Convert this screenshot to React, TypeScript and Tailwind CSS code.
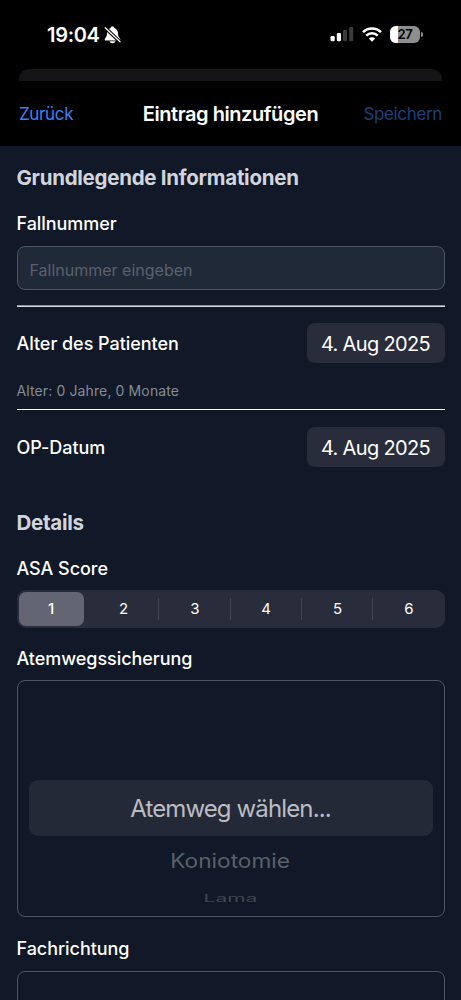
import type { ReactNode } from 'react'

const ASA_SCORES = [1, 2, 3, 4, 5, 6]
const SELECTED_ASA = 1

function BellOffIcon() {
  return (
    <svg width="17" height="18" viewBox="0 0 17 18" aria-hidden="true">
      <path
        d="M8.500.6c-1 0-1.700.5-1.800 1.300C4.400 2.700 3.100 4.600 3 7.300c-.1 2.500-.6 3.600-1.600 4.700-.5.600-.7.900-.7 1.400 0 .6.400 1 1.100 1h13.400c.7 0 1.100-.4 1.100-1 0-.5-.2-.8-.7-1.400-1-1.100-1.500-2.200-1.600-4.700-.1-2.700-1.400-4.600-3.700-5.400-.1-.8-.8-1.300-1.800-1.300z"
        fill="white"
      />
      <path d="M5.600 15.200h5.800c-.3 1.200-1.400 2-2.900 2s-2.600-.8-2.900-2z" fill="white" />
      <path d="M.6 1.200 16.600 16.400" stroke="black" strokeWidth="3.400" />
      <path d="M1.200 1.700 16 15.800" stroke="white" strokeWidth="1.300" strokeLinecap="round" />
    </svg>
  )
}

function SignalIcon() {
  return (
    <svg width="24" height="16" viewBox="0 0 24 16" aria-hidden="true">
      <rect x="0.500" y="10" width="4.200" height="5.300" rx="1.200" fill="white" />
      <rect x="6.800" y="7" width="4.200" height="8.300" rx="1.200" fill="white" />
      <rect x="13" y="4" width="4" height="11.300" rx="1.200" fill="#3b3b3b" />
      <rect x="19.200" y="1" width="4" height="14.300" rx="1.200" fill="#3b3b3b" />
    </svg>
  )
}

function WifiIcon() {
  return (
    <svg width="20" height="15" viewBox="0 0 20 15" aria-hidden="true">
      <g fill="none" stroke="white" strokeWidth="2.500">
        <path d="M1 5.200a12.700 12.700 0 0 1 18 0" />
        <path d="M4.300 8.700a8.100 8.100 0 0 1 11.400 0" />
      </g>
      <path d="M10 14.700 6.800 11.500a4.600 4.600 0 0 1 6.400 0z" fill="white" />
    </svg>
  )
}

function Battery({ level }: { level: number }) {
  return (
    <div className="flex items-center gap-px">
      <div className="relative h-[17px] w-[30px] overflow-hidden rounded-[6px] bg-[#8e8e8e]">
        <div className="h-full bg-white" style={{ width: `${level}%` }} />
        <span className="absolute inset-0 text-center text-[13px] leading-[17px] font-semibold tracking-[-0.2px] text-black">
          {level}
        </span>
      </div>
      <div className="h-[5px] w-[2px] rounded-r-full bg-[#8e8e8e]" />
    </div>
  )
}

function StatusBar() {
  return (
    <div className="flex h-[69px] justify-between pr-[38px] pl-[47px]">
      <div className="flex h-[69px] items-center gap-[4px]">
        <span className="text-[20px] font-semibold tracking-[-0.3px] text-white">19:04</span>
        <BellOffIcon />
      </div>
      <div className="flex h-[68px] items-center gap-[8px]">
        <SignalIcon />
        <WifiIcon />
        <Battery level={27} />
      </div>
    </div>
  )
}

function Label({ children }: { children: ReactNode }) {
  return (
    <span className="block text-[18px] leading-6 font-medium tracking-[-0.05px] text-white">
      {children}
    </span>
  )
}

function SectionTitle({ children }: { children: ReactNode }) {
  return (
    <h2 className="text-[20.5px] leading-7 font-bold tracking-[-0.27px] text-[#d1d5db]">
      {children}
    </h2>
  )
}

function DateRow({ label, value }: { label: string; value: string }) {
  return (
    <div className="flex h-10 items-center justify-between">
      <div className="pt-[2px]">
        <Label>{label}</Label>
      </div>
      <button className="h-10 w-[138px] rounded-[8px] bg-[#292d3b] pt-[2px] text-[20px] tracking-[-0.65px] whitespace-nowrap text-white">
        {value}
      </button>
    </div>
  )
}

function SegmentedControl() {
  return (
    <div className="mt-[9px] grid h-[38px] grid-cols-6 rounded-[9px] bg-[#292d3b]">
      {ASA_SCORES.map((score) => (
        <div key={score} className="flex items-center pl-[2px]">
          <button
            className={
              score === SELECTED_ASA
                ? 'mr-[3px] h-[34px] flex-1 rounded-[7px] bg-[#636672] pt-px text-[15px] font-medium text-white'
                : 'mr-px h-[34px] flex-1 pt-px text-[15px] text-white'
            }
          >
            {score}
          </button>
          <div className={score > 1 && score < 6 ? 'h-[22px] w-px bg-[#42454f]' : 'h-[22px] w-px'} />
        </div>
      ))}
    </div>
  )
}

function WheelPicker() {
  return (
    <div className="mt-[9px] h-[237px] overflow-hidden rounded-[8px] border border-[#4b5563] px-[11px] pt-[99px] text-center">
      <div className="h-[56px] rounded-[9px] bg-[#242937] text-[24px] leading-[57px] tracking-[-0.87px] text-[#bbbdc2]">
        <span>Atemweg wählen...</span>
      </div>
      <div className="h-[50px] text-[22px] leading-[50px] text-[#5b606b]">
        <span className="inline-block scale-x-103 scale-y-90">Koniotomie</span>
      </div>
      <div className="h-6 text-[21px] leading-6 text-[#414753]">
        <span className="inline-block scale-y-50">Lama</span>
      </div>
    </div>
  )
}

export default function App() {
  return (
    <div className="h-[1000px] w-[461px] overflow-hidden bg-[#111827] font-['Inter','Liberation_Sans',sans-serif]">
      <header className="h-[146px] bg-black">
        <StatusBar />
        {/* edge of the sheet underneath */}
        <div className="mx-[19px] h-3 rounded-t-[10px] bg-[#151517]" />
        <nav className="grid h-[65px] grid-cols-[1fr_auto_1fr] items-center px-[19px]">
          <button className="pt-[2px] text-left text-[17px] tracking-[-0.35px] text-[#3b82f6]">
            Zurück
          </button>
          <h1 className="text-[20px] font-semibold tracking-[-0.44px] text-white">
            Eintrag hinzufügen
          </h1>
          <button className="pt-[2px] text-right text-[17px] tracking-[-0.35px] text-[#1e407a]">
            Speichern
          </button>
        </nav>
      </header>

      <main className="px-[16.500px] pt-[18px]">
        <SectionTitle>Grundlegende Informationen</SectionTitle>
        <div className="mt-[20px]">
          <Label>Fallnummer</Label>
        </div>
        <input
          className="mt-[10px] block h-[44px] w-full rounded-[8px] border border-[#4b5563] bg-[#1f2937] px-3 pt-1 text-[16px] placeholder:text-[#5a616d]"
          placeholder="Fallnummer eingeben"
        />
        <div className="mt-[15px] mb-[16px] h-[2px] border-t border-[#8a8c9c] bg-[#d9dae3]" />
        <DateRow label="Alter des Patienten" value="4. Aug 2025" />
        <p className="mt-[18px] text-[14px] leading-5 tracking-[0.12px] text-[#858b96]">
          Alter: 0 Jahre, 0 Monate
        </p>
        <div className="mt-[8px] mb-[17px] h-px bg-white" />
        <DateRow label="OP-Datum" value="4. Aug 2025" />

        <div className="mt-[42px]">
          <SectionTitle>Details</SectionTitle>
        </div>
        <div className="mt-[20px]">
          <Label>ASA Score</Label>
        </div>
        <SegmentedControl />
        <div className="mt-[19px]">
          <Label>Atemwegssicherung</Label>
        </div>
        <WheelPicker />
        <div className="mt-[20px]">
          <Label>Fachrichtung</Label>
        </div>
        <div className="mt-[10px] h-[237px] rounded-[8px] border border-[#4b5563]" />
      </main>
    </div>
  )
}
